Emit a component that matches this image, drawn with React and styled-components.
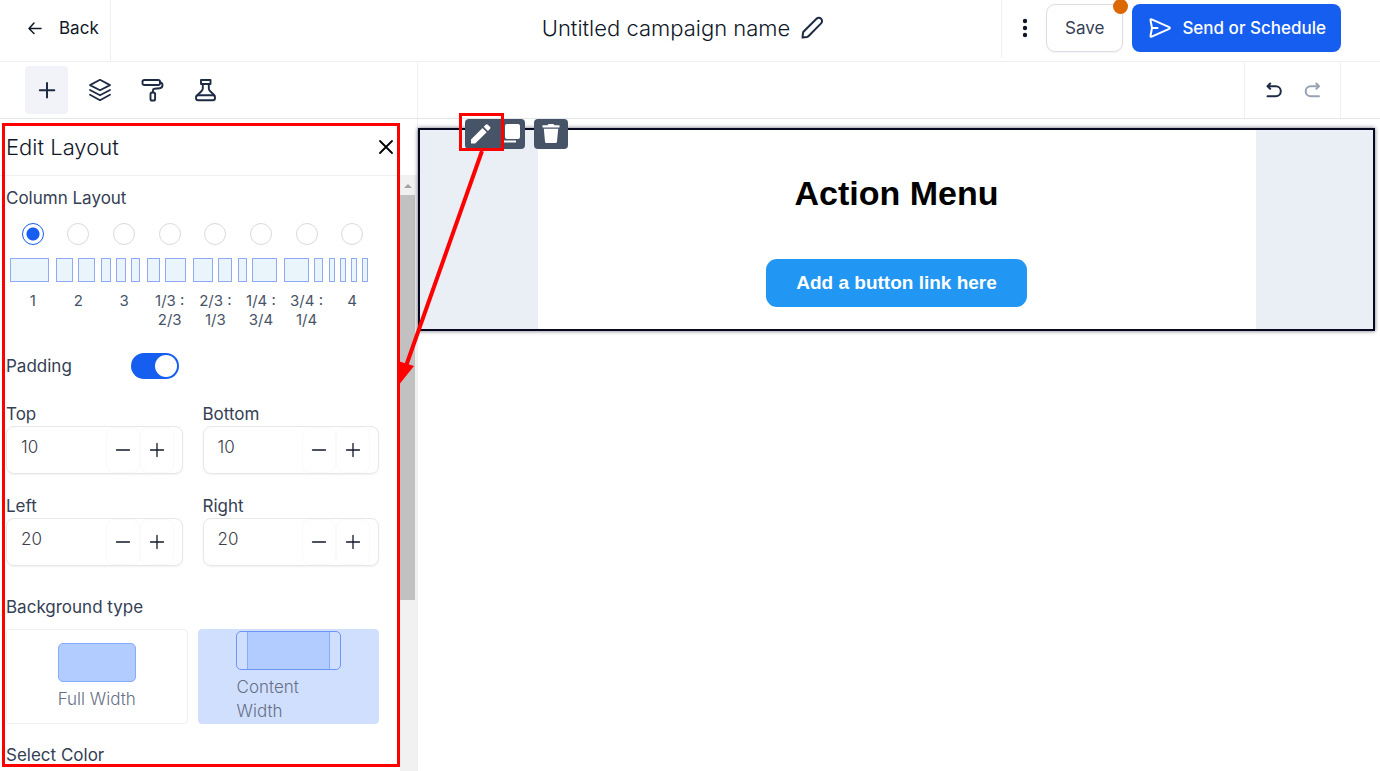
import React, { useState } from 'react';
import styled, { createGlobalStyle } from 'styled-components';

const GlobalStyle = createGlobalStyle`
  * {
    box-sizing: border-box;
  }

  body {
    margin: 0;
    background: white;
    color: #101828;
    font-family: Inter, "Liberation Sans", sans-serif;
  }

  button, input {
    font-family: inherit;
  }

  button {
    cursor: pointer;
  }
`;

const Page = styled.div`
  position: relative;
  display: flex;
  flex-direction: column;
  height: 100vh;
  overflow: hidden;
`;

const Icon = styled.svg`
  display: block;
  flex: none;
  width: ${props => props.$size || 24}px;
  height: ${props => props.$size || 24}px;
  fill: none;
  stroke: currentColor;
  stroke-width: ${props => props.$stroke ?? 2};
  stroke-linecap: round;
  stroke-linejoin: round;
`;

const Header = styled.header`
  flex: none;
  display: grid;
  grid-template-columns: 1fr auto 1fr;
  height: 62px;
  padding-right: 14px;
  border-bottom: 1px solid #eff0f2;
`;

const BackLink = styled.a`
  justify-self: start;
  display: flex;
  align-items: center;
  gap: 16px;
  padding: 0 11px 6px 27px;
  border-right: 1px solid #eff0f2;
  color: #101828;
  font-size: 17px;
  text-decoration: none;
`;

const Campaign = styled.div`
  display: flex;
  align-items: center;
  gap: 10px;
  padding-bottom: 5px;
`;

const CampaignName = styled.h1`
  margin: 0;
  font-size: 22px;
  line-height: 28px;
  font-weight: 300;
`;

const PlainButton = styled.button`
  display: flex;
  align-items: center;
  justify-content: center;
  padding: 0;
  border: none;
  background: none;
  color: ${props => props.$color || '#1d2b44'};
`;

const HeaderActions = styled.div`
  justify-self: end;
  display: flex;
  align-items: center;
  height: 58px;
  padding: 0 25px 2px 11px;
  border-left: 1px solid #eff0f2;
`;

const SaveButton = styled.button`
  position: relative;
  height: 48px;
  margin: 0 9px;
  padding: 0 18px;
  border: 1px solid #dcdde6;
  border-radius: 9px;
  background: white;
  box-shadow: 0 1px 2px rgba(16, 24, 40, 0.05);
  color: #344054;
  font-size: 17px;
`;

const UnsavedDot = styled.span`
  position: absolute;
  top: -6px;
  right: -6px;
  width: 15px;
  height: 15px;
  border-radius: 50%;
  background: #dc6803;
`;

const SendButton = styled.button`
  display: flex;
  align-items: center;
  gap: 10px;
  height: 48px;
  padding: 0 15px 0 16px;
  border: none;
  border-radius: 8px;
  background: #155eef;
  color: white;
  font-size: 17px;
  font-weight: 500;
`;

const Toolbar = styled.div`
  flex: none;
  display: flex;
  height: 57px;
  border-bottom: 1px solid #e4e7e9;
`;

const ToolTabs = styled.nav`
  display: flex;
  align-items: center;
  gap: 10px;
  width: 418px;
  padding-left: 25px;
  border-right: 1px solid #eff0f2;
`;

const ToolTab = styled.button`
  display: flex;
  align-items: center;
  justify-content: center;
  width: 43px;
  height: 48px;
  padding: 0;
  border: none;
  border-radius: 4px;
  background: ${props => props.$active ? '#f2f3f8' : 'none'};
  color: #1d2b44;
`;

const History = styled.div`
  display: flex;
  align-items: center;
  justify-content: center;
  gap: 18px;
  width: 97px;
  margin: 0 39px 0 auto;
  border: solid #eff0f2;
  border-width: 0 1px;
`;

const Workspace = styled.div`
  flex: 1;
  display: flex;
  min-height: 0;
`;

const Sidebar = styled.aside`
  position: relative;
  flex: none;
  display: flex;
  flex-direction: column;
  width: 418px;
  border-right: 1px solid #eceded;
`;

const PanelHighlight = styled.div`
  position: absolute;
  inset: 4px 17px 4px 2px;
  border: 3px solid #ff0000;
  pointer-events: none;
`;

const PanelHeader = styled.div`
  flex: none;
  display: flex;
  align-items: center;
  justify-content: space-between;
  height: 57px;
  padding: 0 22px 0 6px;
  border-bottom: 1px solid #eff0f2;
`;

const PanelTitle = styled.h2`
  margin: 0;
  font-size: 22px;
  line-height: 28px;
  font-weight: 300;
`;

const PanelScroll = styled.div`
  flex: 1;
  display: flex;
  min-height: 0;
`;

const PanelBody = styled.div`
  flex: 1;
  padding: 10px 21px 0 6px;
  overflow: hidden;
`;

const Scrollbar = styled.div`
  display: flex;
  flex-direction: column;
  width: 17px;
  padding-right: 2px;
  background: #f1f1f1;
`;

const ScrollUp = styled.div`
  display: flex;
  align-items: center;
  justify-content: center;
  height: 19px;
  color: #a3a3a3;
`;

const ScrollThumb = styled.div`
  height: 68%;
  background: #c1c1c1;
`;

const Label = styled.div`
  color: #344054;
  font-size: 17px;
  line-height: 24px;
`;

const ColumnGrid = styled.div`
  display: grid;
  grid-template-columns: repeat(8, minmax(0, 1fr));
  margin: 13px 4px 0;
`;

const ColumnOption = styled.label`
  display: flex;
  flex-direction: column;
  align-items: center;
  gap: 9px;
  color: #475467;
  font-size: 15px;
  line-height: 19px;
  text-align: center;
`;

const Radio = styled.input`
  appearance: none;
  display: block;
  width: 22px;
  height: 22px;
  margin: 0 0 4px;
  border: 1px solid #d9dadd;
  border-radius: 50%;

  &:checked {
    border: 1px solid #155eef;
    background: radial-gradient(circle, #155eef 6px, white 7px);
  }
`;

const ColumnPreview = styled.span`
  align-self: flex-start;
  display: grid;
  grid-template-columns: ${props => props.$columns};
  gap: 5px;
  width: 39px;
  height: 24px;

  span {
    border: 1px solid #8fa9f5;
    background: #eaf5fb;
  }
`;

const ToggleRow = styled.div`
  display: flex;
  align-items: center;
  gap: 59px;
  margin-top: 24px;
`;

const Toggle = styled.input`
  appearance: none;
  display: flex;
  align-items: center;
  justify-content: flex-end;
  width: 48px;
  height: 26px;
  margin: 0;
  padding: 0 2px;
  border-radius: 13px;
  background: #155eef;

  &::before {
    content: "";
    width: 22px;
    height: 22px;
    border-radius: 50%;
    background: white;
  }

  &:not(:checked) {
    justify-content: flex-start;
    background: #d0d5dd;
  }
`;

const SpacingGrid = styled.div`
  display: grid;
  grid-template-columns: repeat(2, minmax(0, 1fr));
  gap: 20px;
  margin: 23px 0 29px;
`;

const FieldLabel = styled.label`
  display: block;
  color: #344054;
  font-size: 17px;
  line-height: 24px;
`;

const Stepper = styled.div`
  display: flex;
  height: 48px;
  padding-right: 8px;
  border: 1px solid #e6e7e9;
  border-radius: 8px;
  box-shadow: 0 1px 2px rgba(16, 24, 40, 0.06);
`;

const StepperInput = styled.input`
  flex: 1;
  min-width: 0;
  padding: 0 0 7px 14px;
  border: none;
  background: none;
  color: #3c4048;
  font-size: 17px;
  font-weight: 300;
  outline: none;
`;

const StepButton = styled.button`
  display: flex;
  align-items: center;
  justify-content: center;
  width: 34px;
  padding: 0;
  border: 1px solid #fafafa;
  border-radius: 8px;
  background: none;
  color: #101828;
`;

const TypeGrid = styled.div`
  display: grid;
  grid-template-columns: repeat(2, minmax(0, 1fr));
  gap: 10px;
  margin: 10px 0 19px;
`;

const TypeCard = styled.button`
  display: flex;
  flex-direction: column;
  align-items: center;
  justify-content: center;
  gap: 5px;
  height: 95px;
  padding: 0 38px;
  border: 1px solid ${props => props.$active ? '#d1dfff' : '#eff0f2'};
  border-radius: 4px;
  background: ${props => props.$active ? '#d1dfff' : 'white'};
  color: #667085;
  font-size: 17px;
  font-weight: 300;
  line-height: 24px;
  text-align: left;
`;

const FullWidthPreview = styled.span`
  width: 78px;
  height: 39px;
  border: 1px solid #84adff;
  border-radius: 5px;
  background: #b2ccff;
`;

const ContentWidthPreview = styled.span`
  width: 105px;
  height: 39px;
  padding: 0 10px;
  border: 1px solid #6b96f7;
  border-radius: 5px;

  &::before {
    content: "";
    display: block;
    height: 100%;
    border: solid #84adff;
    border-width: 0 1px;
    background: #b2ccff;
  }
`;

const Canvas = styled.main`
  flex: 1;
  padding: 9px 5px 0 0;
`;

const EmailBlock = styled.section`
  position: relative;
  display: flex;
  justify-content: center;
  border: 2px solid #07071f;
  background: #eaeff6;
  box-shadow: 0 0 4px rgba(7, 7, 31, 0.6);
`;

const EmailContent = styled.div`
  display: flex;
  flex-direction: column;
  align-items: center;
  gap: 46px;
  width: 718px;
  padding: 43px 20px 22px;
  background: white;
`;

const EmailTitle = styled.h2`
  margin: 0;
  color: black;
  font-family: "Liberation Sans", Arial, sans-serif;
  font-size: 34px;
  line-height: 40px;
  font-weight: 700;
`;

const EmailButton = styled.a`
  padding: 12px 30px;
  border-radius: 11px;
  background: #2196f3;
  color: white;
  font-family: "Liberation Sans", Arial, sans-serif;
  font-size: 19px;
  line-height: 24px;
  font-weight: 700;
  text-decoration: none;
`;

const BlockTools = styled.div`
  position: absolute;
  top: -11px;
  left: 45px;
  display: flex;
  gap: 9px;
`;

const ToolGroup = styled.div`
  position: relative;
  display: flex;
  border-radius: 4px;
  background: #475467;
`;

const ToolButton = styled.button`
  display: flex;
  align-items: center;
  justify-content: center;
  width: ${props => props.$width}px;
  height: 30px;
  padding: 0;
  border: none;
  background: none;
  color: white;
`;

const ToolHighlight = styled.div`
  position: absolute;
  inset: -6px 21px -2px -6px;
  border: 3px solid #ff0000;
  pointer-events: none;
`;

const Pointer = styled.svg`
  position: absolute;
  top: 150px;
  left: 397px;
  width: 90px;
  height: 238px;
  pointer-events: none;
`;

const columnOptions = [
  { label: '1', columns: '1fr' },
  { label: '2', columns: '1fr 1fr' },
  { label: '3', columns: '1fr 1fr 1fr' },
  { label: '1/3 : 2/3', columns: '2fr 3fr' },
  { label: '2/3 : 1/3', columns: '3fr 2fr' },
  { label: '1/4 : 3/4', columns: '1fr 3fr' },
  { label: '3/4 : 1/4', columns: '3fr 1fr' },
  { label: '4', columns: '1fr 1fr 1fr 1fr' },
];

function PencilOutline() {
  return (
    <Icon viewBox="0 0 24 24" $stroke={2}>
      <path d="M2.500 21.500l.5-4.600c.1-.5.3-1 .7-1.400L16.500 2.800a3.200 3.200 0 0 1 4.600 4.600L8.400 20.200c-.4.4-.9.600-1.400.700z" />
    </Icon>
  );
}

function StepperField({ id, label, initial }) {
  const [value, setValue] = useState(initial);

  return (
    <div>
      <FieldLabel htmlFor={id}>{label}</FieldLabel>
      <Stepper>
        <StepperInput id={id} value={value} onChange={(e) => setValue(Number(e.target.value) || 0)} />
        <StepButton aria-label={`Decrease ${label}`} onClick={() => setValue(value - 1)}>
          <Icon $size={16} $stroke={1.3} viewBox="0 0 16 16"><path d="M1.500 8h13" /></Icon>
        </StepButton>
        <StepButton aria-label={`Increase ${label}`} onClick={() => setValue(value + 1)}>
          <Icon $size={16} $stroke={1.3} viewBox="0 0 16 16"><path d="M1.500 8h13M8 1.500v13" /></Icon>
        </StepButton>
      </Stepper>
    </div>
  );
}

function EditPanel() {
  const [layout, setLayout] = useState('1');
  const [padding, setPadding] = useState(true);
  const [background, setBackground] = useState('content');

  return (
    <Sidebar>
      <PanelHeader>
        <PanelTitle>Edit Layout</PanelTitle>
        <PlainButton aria-label="Close" $color="#000">
          <Icon $size={18} $stroke={1.8} viewBox="0 0 18 18"><path d="M3 3l12 12M15 3L3 15" /></Icon>
        </PlainButton>
      </PanelHeader>
      <PanelScroll>
        <PanelBody>
          <Label>Column Layout</Label>
          <ColumnGrid>
            {columnOptions.map((option) => (
              <ColumnOption key={option.label}>
                <Radio
                  type="radio"
                  name="layout"
                  checked={layout === option.label}
                  onChange={() => setLayout(option.label)}
                />
                <ColumnPreview $columns={option.columns}>
                  {option.columns.split(' ').map((_, i) => <span key={i} />)}
                </ColumnPreview>
                {option.label}
              </ColumnOption>
            ))}
          </ColumnGrid>
          <ToggleRow>
            <FieldLabel htmlFor="padding">Padding</FieldLabel>
            <Toggle id="padding" type="checkbox" checked={padding} onChange={() => setPadding(!padding)} />
          </ToggleRow>
          <SpacingGrid>
            <StepperField id="top" label="Top" initial={10} />
            <StepperField id="bottom" label="Bottom" initial={10} />
            <StepperField id="left" label="Left" initial={20} />
            <StepperField id="right" label="Right" initial={20} />
          </SpacingGrid>
          <Label>Background type</Label>
          <TypeGrid>
            <TypeCard $active={background === 'full'} onClick={() => setBackground('full')}>
              <FullWidthPreview />
              Full Width
            </TypeCard>
            <TypeCard $active={background === 'content'} onClick={() => setBackground('content')}>
              <ContentWidthPreview />
              Content Width
            </TypeCard>
          </TypeGrid>
          <Label>Select Color</Label>
        </PanelBody>
        <Scrollbar>
          <ScrollUp>
            <svg width="8" height="4" viewBox="0 0 8 4"><path d="M0 4l4-4 4 4z" fill="currentColor" /></svg>
          </ScrollUp>
          <ScrollThumb />
        </Scrollbar>
      </PanelScroll>
      <PanelHighlight />
    </Sidebar>
  );
}

function App() {
  return (
    <Page>
      <GlobalStyle />
      <Header>
        <BackLink href="#">
          <Icon $size={16} $stroke={1.5} viewBox="0 0 16 16"><path d="M14 8.500H2M7 3L2 8.500l5 5" /></Icon>
          Back
        </BackLink>
        <Campaign>
          <CampaignName>Untitled campaign name</CampaignName>
          <PlainButton aria-label="Rename campaign"><PencilOutline /></PlainButton>
        </Campaign>
        <HeaderActions>
          <PlainButton aria-label="More options" $color="#101828">
            <Icon $stroke={0} viewBox="0 0 24 24">
              <g fill="currentColor">
                <circle cx="12" cy="5" r="2.200" />
                <circle cx="12" cy="12" r="2.200" />
                <circle cx="12" cy="19" r="2.200" />
              </g>
            </Icon>
          </PlainButton>
          <SaveButton>
            Save
            <UnsavedDot />
          </SaveButton>
          <SendButton>
            <Icon viewBox="0 0 24 24" $stroke={2}>
              <path d="M4 12L2.500 4.300c-.2-.9.4-1.400 1.200-1l17.500 7.900c.8.4.8 1.200 0 1.600L3.700 20.700c-.8.4-1.400-.1-1.200-1zM4 12h5.500" />
            </Icon>
            Send or Schedule
          </SendButton>
        </HeaderActions>
      </Header>

      <Toolbar>
        <ToolTabs>
          <ToolTab $active aria-label="Add">
            <Icon viewBox="0 0 24 24" $stroke={2}><path d="M12 5v14.500M4.800 12.200h14.500" /></Icon>
          </ToolTab>
          <ToolTab aria-label="Layers">
            <Icon viewBox="0 0 24 24" $stroke={1.800}>
              <path d="M12 1.800l10 5.300-10 5.200L2 7.100zM2 12l10 5.300L22 12M2 16.800l10 5.400 10-5.400" />
            </Icon>
          </ToolTab>
          <ToolTab aria-label="Styles">
            <Icon viewBox="0 0 24 24" $stroke={1.900}>
              <rect x="1.500" y="2" width="17.500" height="5" rx="1.800" />
              <path d="M19 4.500c1.800 0 2.500.8 2.500 2.600 0 2.200-.8 3-2.800 3.200l-5.200.5c-1 .1-1.600.6-1.600 1.600v2" />
              <rect x="9.500" y="14.500" width="4.600" height="8" rx="1.600" />
            </Icon>
          </ToolTab>
          <ToolTab aria-label="Test">
            <Icon viewBox="0 0 24 24" $stroke={1.900}>
              <path d="M7 2h9.500v4H7zM8.800 6v4.500c0 1-.5 2-1.400 2.800L3.200 17.300M14.800 6v4.500c0 1 .5 2 1.400 2.800l4.200 4" />
              <rect x="2" y="17.300" width="19" height="5" rx="2.300" />
            </Icon>
          </ToolTab>
        </ToolTabs>
        <History>
          <PlainButton aria-label="Undo">
            <Icon $size={20} viewBox="0 0 20 20" $stroke={2}><path d="M6.200 3.500L3.500 6.200l2.700 2.700M3.500 6.200h8.300a5 5 0 0 1 0 10H3.500" /></Icon>
          </PlainButton>
          <PlainButton aria-label="Redo" $color="#98a2b3">
            <Icon $size={20} viewBox="0 0 20 20" $stroke={2}><path d="M14.300 3.500L17 6.200l-2.700 2.700M17 6.200H8.700a5 5 0 0 0 0 10H17" /></Icon>
          </PlainButton>
        </History>
      </Toolbar>

      <Workspace>
        <EditPanel />
        <Canvas>
          <EmailBlock>
            <EmailContent>
              <EmailTitle>Action Menu</EmailTitle>
              <EmailButton href="#">Add a button link here</EmailButton>
            </EmailContent>
            <BlockTools>
              <ToolGroup>
                <ToolButton $width={34} aria-label="Edit block">
                  <Icon $size={22} $stroke={0} viewBox="0 0 22 22">
                    <path fill="currentColor" d="M0 20.500v-4L11.500 5l4.200 4.200L4.200 20.500zM12.700 3.800l2-2c.7-.7 1.500-.7 2.200 0l2 2c.7.7.7 1.500 0 2.200l-2 2z" />
                  </Icon>
                </ToolButton>
                <ToolButton $width={26} aria-label="Duplicate block">
                  <Icon $size={22} $stroke={0} viewBox="0 0 22 22">
                    <g fill="currentColor">
                      <rect x="4" y="1" width="15" height="15" rx="2" />
                      <path d="M0 6h2v11.500h13v2H2a2 2 0 0 1-2-2z" />
                    </g>
                  </Icon>
                </ToolButton>
                <ToolHighlight />
              </ToolGroup>
              <ToolGroup>
                <ToolButton $width={34} aria-label="Delete block">
                  <Icon $size={22} $stroke={0} viewBox="0 0 22 22">
                    <path fill="currentColor" d="M2.500 2.300h5l1-1.300h5l1 1.300h5v2.200h-17zM3.800 5.800h14.400L17 18.500c-.1 1-.8 1.500-1.600 1.500H6.600c-.8 0-1.500-.5-1.600-1.500z" />
                  </Icon>
                </ToolButton>
              </ToolGroup>
            </BlockTools>
          </EmailBlock>
        </Canvas>
      </Workspace>

      <Pointer viewBox="0 0 90 238">
        <path d="M85 1L9 216" fill="none" stroke="#ff0000" strokeWidth="4" />
        <path d="M1 211l16 5L1 236z" fill="#ff0000" />
      </Pointer>
    </Page>
  );
}

export default App;
